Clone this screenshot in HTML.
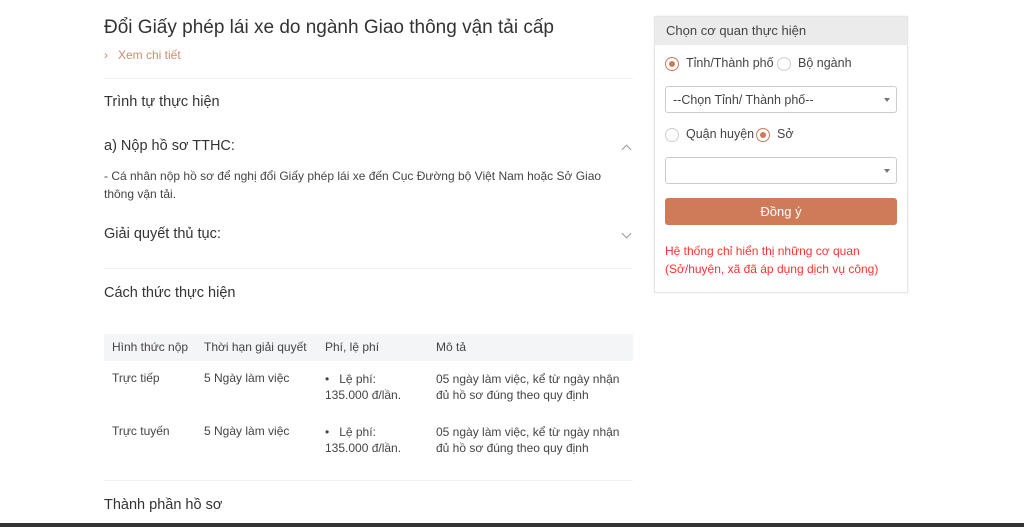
<!DOCTYPE html>
<html><head><meta charset="utf-8"><style>
*{margin:0;padding:0;box-sizing:border-box}
body{width:1024px;height:527px;background:#fff;font-family:"Liberation Sans",sans-serif;color:#333;position:relative;overflow:hidden}
.a{position:absolute;white-space:nowrap}
.hr{position:absolute;left:104px;width:529px;height:1px;background:#edf1f6}
.h{font-size:14.5px;color:#333}
.s{font-size:12px;color:#444}
.chev{position:absolute;width:7px;height:7px;border-left:1.2px solid #999;border-top:1.2px solid #999}
.radio{position:absolute;width:14px;height:14px;border:1px solid #ccc;border-radius:50%}
.radio.on{border-color:#c97b5b}
.radio.on:after{content:"";position:absolute;left:3px;top:3px;width:6px;height:6px;border-radius:50%;background:#c97b5b}
.sel{position:absolute;left:665px;width:232px;height:27px;border:1px solid #ccc;border-radius:3px;font-size:12.5px;color:#444;padding:6px 7px}
.sel:after{content:"";position:absolute;right:6px;top:11px;border:3px solid transparent;border-top:4px solid #777}
.r{font-size:12.5px;color:#444}
</style></head><body>
<div class="a" style="left:104px;top:17px;font-size:19px;color:#333">Đổi Giấy phép lái xe do ngành Giao thông vận tải cấp</div>
<div class="a" style="left:104px;top:48px;font-size:12px;color:#d08a6a">›&nbsp;&nbsp;&nbsp;Xem chi tiết</div>
<div class="hr" style="top:78px"></div>
<div class="a h" style="left:104px;top:94px">Trình tự thực hiện</div>
<div class="a h" style="left:104px;top:138px">a) Nộp hồ sơ TTHC:</div>
<div class="chev" style="left:623px;top:146px;transform:rotate(45deg)"></div>
<div class="a s" style="left:104px;top:167px;line-height:18px">- Cá nhân nộp hồ sơ để nghị đổi Giấy phép lái xe đến Cục Đường bộ Việt Nam hoặc Sở Giao<br>thông vận tải.</div>
<div class="a h" style="left:104px;top:226px">Giải quyết thủ tục:</div>
<div class="chev" style="left:623px;top:230px;transform:rotate(225deg)"></div>
<div class="hr" style="top:268px"></div>
<div class="a h" style="left:104px;top:285px">Cách thức thực hiện</div>
<div style="position:absolute;left:104px;top:334px;width:529px;height:27px;background:#f4f5f7"></div>
<div class="a s" style="left:112px;top:340px">Hình thức nộp</div>
<div class="a s" style="left:204px;top:340px">Thời hạn giải quyết</div>
<div class="a s" style="left:325px;top:340px">Phí, lệ phí</div>
<div class="a s" style="left:436px;top:340px">Mô tả</div>
<div class="a s" style="left:112px;top:371px">Trực tiếp</div>
<div class="a s" style="left:204px;top:371px">5 Ngày làm việc</div>
<div class="a s" style="left:325px;top:371px;line-height:16px">•&nbsp;&nbsp;&nbsp;Lệ phí:<br>135.000 đ/lần.</div>
<div class="a s" style="left:436px;top:371px;line-height:16px">05 ngày làm việc, kể từ ngày nhận<br>đủ hồ sơ đúng theo quy định</div>
<div class="a s" style="left:112px;top:424px">Trực tuyến</div>
<div class="a s" style="left:204px;top:424px">5 Ngày làm việc</div>
<div class="a s" style="left:325px;top:424px;line-height:16px">•&nbsp;&nbsp;&nbsp;Lệ phí:<br>135.000 đ/lần.</div>
<div class="a s" style="left:436px;top:424px;line-height:16px">05 ngày làm việc, kể từ ngày nhận<br>đủ hồ sơ đúng theo quy định</div>
<div class="hr" style="top:480px"></div>
<div class="a h" style="left:104px;top:497px">Thành phần hồ sơ</div>
<div style="position:absolute;left:0;top:523px;width:1024px;height:4px;background:#333"></div>

<div style="position:absolute;left:654px;top:16px;width:254px;height:277px;border:1px solid #e6e6e6;box-shadow:0 0 2px rgba(0,0,0,.08)"></div>
<div style="position:absolute;left:655px;top:17px;width:252px;height:28px;background:#ebebeb"></div>
<div class="a" style="left:666px;top:23px;font-size:13px;color:#444">Chọn cơ quan thực hiện</div>
<div class="radio on" style="left:665px;top:57px"></div>
<div class="a r" style="left:686px;top:56px">Tỉnh/Thành phố</div>
<div class="radio" style="left:777px;top:57px"></div>
<div class="a r" style="left:798px;top:56px">Bộ ngành</div>
<div class="sel" style="top:86px">--Chọn Tỉnh/ Thành phố--</div>
<div class="radio" style="left:665px;top:128px"></div>
<div class="a r" style="left:686px;top:127px">Quận huyện</div>
<div class="radio on" style="left:756px;top:128px"></div>
<div class="a r" style="left:777px;top:127px">Sở</div>
<div class="sel" style="top:157px"></div>
<div style="position:absolute;left:665px;top:198px;width:232px;height:27px;background:#cf7b58;border-radius:3px;color:#fff;font-size:13px;text-align:center;line-height:27px">Đồng ý</div>
<div class="a" style="left:665px;top:242px;font-size:12px;color:#f33;line-height:18px">Hệ thống chỉ hiển thị những cơ quan<br>(Sở/huyện, xã đã áp dụng dịch vụ công)</div>
</body></html>
